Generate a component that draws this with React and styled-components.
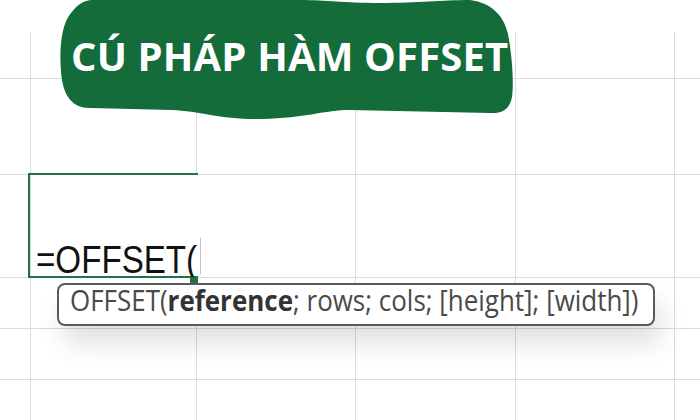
import React from 'react';
import styled, { createGlobalStyle } from 'styled-components';

const GlobalStyle = createGlobalStyle`
  html, body {
    margin: 0;
    padding: 0;
    background: #ffffff;
  }
  body {
    font-family: "Liberation Sans", Arial, sans-serif;
  }
`;

const COLS = [31, 166, 159, 160, 159];
const ROWS = [47, 96, 103, 51, 51];
const EDIT_ROW = 2;
const EDIT_COL = 1;

const Page = styled.div`
  position: relative;
  width: 700px;
  height: 420px;
  overflow: hidden;
  background: #ffffff;
`;

const Sheet = styled.div`
  display: grid;
  grid-template-columns: ${COLS.map((c) => `${c}px`).join(' ')} 1fr;
  grid-template-rows: ${ROWS.map((r) => `${r}px`).join(' ')} 1fr;
  height: 100%;
  padding-top: 32px;
  box-sizing: border-box;
`;

const Cell = styled.div`
  box-sizing: border-box;
  border-right: ${({ $lastCol }) => ($lastCol ? 'none' : '1px solid #dcdcdc')};
  border-bottom: ${({ $lastRow }) => ($lastRow ? 'none' : '1px solid #dcdcdc')};
`;

const EditCell = styled.div`
  position: relative;
  z-index: 1;
  box-sizing: border-box;
  display: flex;
  align-items: flex-end;
  padding: 0 0 1px 5px;
  background: #ffffff;
  border-bottom: 1px solid #dcdcdc;

  &::before {
    content: '';
    position: absolute;
    top: -2px;
    left: -3px;
    right: -1px;
    bottom: -1px;
    border: 2px solid #217346;
    border-right: none;
  }

  &::after {
    content: '';
    position: absolute;
    left: 159px;
    top: 102px;
    width: 8px;
    height: 6px;
    background: #217346;
  }
`;

const FormulaText = styled.span`
  display: inline-block;
  font-family: "Liberation Sans", Arial, sans-serif;
  font-size: 39px;
  line-height: 32px;
  color: #111111;
  white-space: nowrap;
  transform: scaleX(0.85);
  transform-origin: left center;
`;

const Caret = styled.span`
  position: absolute;
  left: 169px;
  top: 63px;
  width: 1px;
  height: 36px;
  background: #c4c4c4;
`;

const TitleBadge = styled.div`
  position: absolute;
  left: 55px;
  top: 0;
  width: 462px;
  height: 122px;
  z-index: 2;
`;

const BadgeShape = styled.svg`
  position: absolute;
  inset: 0;
  width: 100%;
  height: 100%;
`;

const Title = styled.h1`
  position: relative;
  margin: 0;
  padding: 36px 0 0 16px;
  font-family: "Open Sans", "Noto Sans", sans-serif;
  font-weight: 700;
  font-size: 40px;
  line-height: 40px;
  letter-spacing: 0.15px;
  color: #ffffff;
  white-space: nowrap;
`;

const Tooltip = styled.div`
  position: absolute;
  left: 57px;
  top: 283px;
  width: 598px;
  height: 43px;
  box-sizing: border-box;
  padding: 0 11px;
  border: 2px solid #5a5a5a;
  border-radius: 8px;
  background: #ffffff;
  box-shadow: 6px 18px 26px rgba(0, 0, 0, 0.12);
  z-index: 2;
`;

const TooltipText = styled.span`
  display: inline-block;
  font-family: "Open Sans", "Noto Sans", sans-serif;
  font-size: 29px;
  line-height: 29px;
  color: #4a4a4a;
  white-space: nowrap;
  transform: scaleX(0.895);
  transform-origin: left center;
`;

const Arg = styled.b`
  font-weight: 700;
  color: #333333;
`;

export default function App() {
  const cells = [];
  for (let r = 0; r <= ROWS.length; r += 1) {
    for (let c = 0; c <= COLS.length; c += 1) {
      if (r === EDIT_ROW && c === EDIT_COL) {
        cells.push(
          <EditCell key={`${r}-${c}`}>
            <FormulaText>=OFFSET(</FormulaText>
            <Caret />
          </EditCell>,
        );
      } else {
        cells.push(
          <Cell key={`${r}-${c}`} $lastCol={c === COLS.length} $lastRow={r === ROWS.length} />,
        );
      }
    }
  }

  return (
    <>
      <GlobalStyle />
      <Page>
        <Sheet>{cells}</Sheet>

        <TitleBadge>
          <BadgeShape viewBox="55 0 462 122" preserveAspectRatio="none">
            <path
              fill="#146c3a"
              d="M 92 0 L 300 0 C 330 0 340 3 380 3 C 420 3 440 0 470 0
                 C 492 3 504 16 508 34 C 512 55 514 82 512 97
                 C 510 108 503 114 490 113 L 350 110
                 C 325 110 305 118 262 119 C 222 120 200 111 172 110
                 L 90 108 C 72 108 63 96 61 72 C 59 45 62 24 71 13
                 C 77 5 84 0 92 0 Z"
            />
          </BadgeShape>
          <Title>CÚ PHÁP HÀM OFFSET</Title>
        </TitleBadge>

        <Tooltip>
          <TooltipText>
            OFFSET(<Arg>reference</Arg>; rows; cols; [height]; [width])
          </TooltipText>
        </Tooltip>
      </Page>
    </>
  );
}
